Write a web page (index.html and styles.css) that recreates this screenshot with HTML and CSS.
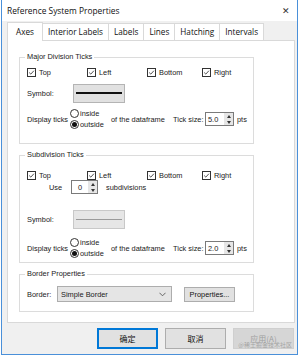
FILE: index.html
```html
<!DOCTYPE html>
<html lang="en">
<head>
  <meta charset="UTF-8">
  <title>Reference System Properties</title>
  <link rel="stylesheet" href="styles.css">
</head>
<body>
  <div class="window">
    <div class="titlebar">
      <span class="title">Reference System Properties</span>
      <span class="close">&#x2715;</span>
    </div>

    <div class="tabs">
      <span class="tab active">Axes</span>
      <span class="tab">Interior Labels</span>
      <span class="tab">Labels</span>
      <span class="tab">Lines</span>
      <span class="tab">Hatching</span>
      <span class="tab">Intervals</span>
    </div>

    <div class="panel">
      <fieldset class="group group-major">
        <legend>Major Division Ticks</legend>
        <div class="checks">
          <label class="check"><span class="box"><svg viewBox="0 0 9 9"><path d="M1.5 4.5 L3.6 6.6 L7.6 2.2" /></svg></span>Top</label>
          <label class="check"><span class="box"><svg viewBox="0 0 9 9"><path d="M1.5 4.5 L3.6 6.6 L7.6 2.2" /></svg></span>Left</label>
          <label class="check"><span class="box"><svg viewBox="0 0 9 9"><path d="M1.5 4.5 L3.6 6.6 L7.6 2.2" /></svg></span>Bottom</label>
          <label class="check"><span class="box"><svg viewBox="0 0 9 9"><path d="M1.5 4.5 L3.6 6.6 L7.6 2.2" /></svg></span>Right</label>
        </div>
        <div class="symbol-row">
          <span class="lbl">Symbol:</span>
          <span class="symbol"><span class="line"></span></span>
        </div>
        <div class="ticks-row">
          <span class="lbl">Display ticks</span>
          <div class="radios">
            <label class="radio"><span class="dot"></span>inside</label>
            <label class="radio"><span class="dot on"></span>outside</label>
          </div>
          <span class="frame">of the dataframe</span>
          <span class="size-lbl">Tick size:</span>
          <span class="spin"><span class="val">5.0</span><span class="arrows"><i class="up"></i><i class="down"></i></span></span>
          <span class="unit">pts</span>
        </div>
      </fieldset>

      <fieldset class="group group-sub">
        <legend>Subdivision Ticks</legend>
        <div class="checks">
          <label class="check"><span class="box"><svg viewBox="0 0 9 9"><path d="M1.5 4.5 L3.6 6.6 L7.6 2.2" /></svg></span>Top</label>
          <label class="check"><span class="box"><svg viewBox="0 0 9 9"><path d="M1.5 4.5 L3.6 6.6 L7.6 2.2" /></svg></span>Left</label>
          <label class="check"><span class="box"><svg viewBox="0 0 9 9"><path d="M1.5 4.5 L3.6 6.6 L7.6 2.2" /></svg></span>Bottom</label>
          <label class="check"><span class="box"><svg viewBox="0 0 9 9"><path d="M1.5 4.5 L3.6 6.6 L7.6 2.2" /></svg></span>Right</label>
        </div>
        <div class="use-row">
          <span class="use">Use</span>
          <span class="spin spin-use"><span class="val">0</span><span class="arrows"><i class="up"></i><i class="down"></i></span></span>
          <span class="subs">subdivisions</span>
        </div>
        <div class="symbol-row">
          <span class="lbl">Symbol:</span>
          <span class="symbol disabled"><span class="line"></span></span>
        </div>
        <div class="ticks-row">
          <span class="lbl">Display ticks</span>
          <div class="radios">
            <label class="radio"><span class="dot"></span>inside</label>
            <label class="radio"><span class="dot on"></span>outside</label>
          </div>
          <span class="frame">of the dataframe</span>
          <span class="size-lbl">Tick size:</span>
          <span class="spin"><span class="val">2.0</span><span class="arrows"><i class="up"></i><i class="down"></i></span></span>
          <span class="unit">pts</span>
        </div>
      </fieldset>

      <fieldset class="group group-border">
        <legend>Border Properties</legend>
        <div class="border-row">
          <span class="lbl">Border:</span>
          <span class="select">Simple Border<svg class="chev" viewBox="0 0 8 5"><path d="M0.5 0.5 L4 4 L7.5 0.5" /></svg></span>
          <button class="btn small">Properties...</button>
        </div>
      </fieldset>
    </div>

    <div class="footer">
      <button class="btn default">确定</button>
      <button class="btn">取消</button>
      <button class="btn disabled">应用(A)</button>
      <span class="watermark">@稀土掘金技术社区</span>
    </div>
  </div>
</body>
</html>
```

FILE: styles.css
```css
* {
  box-sizing: border-box;
  margin: 0;
  padding: 0;
}

body {
  width: 300px;
  height: 357px;
  background: #fff;
  font-family: 'Liberation Sans', Arial, 'Noto Sans CJK SC', sans-serif;
  font-size: 7.4px;
  color: #1a1a1a;
  padding-left: 1px;
  white-space: nowrap;
}

.window {
  width: 297px;
  height: 355px;
  border: 1px solid #4a90d9;
  border-top: none;
  background: #f0f0f0;
  display: flex;
  flex-direction: column;
  position: relative;
}

.titlebar {
  height: 21px;
  background: #fff;
  display: flex;
  align-items: center;
  justify-content: space-between;
  padding: 0 7px 0 5px;
}

.title {
  font-family: 'Open Sans', 'Noto Sans', sans-serif;
  font-size: 8.4px;
  color: #111;
}

.close {
  font-size: 9px;
  color: #333;
}

.tabs {
  display: flex;
  align-items: flex-end;
  padding-left: 5px;
  height: 19px;
}

.tab {
  font-family: 'Open Sans', 'Noto Sans', sans-serif;
  font-size: 8.2px;
  height: 17px;
  line-height: 16px;
  padding: 0 5px;
  border: 1px solid #d9d9d9;
  border-bottom: none;
  border-left: none;
  background: #fff;
  color: #111;
}

.tab.active {
  height: 19px;
  line-height: 17px;
  padding: 0 8px;
  border-left: 1px solid #d9d9d9;
  margin-bottom: -1px;
  position: relative;
  z-index: 1;
}

.panel {
  margin-left: 5px;
  width: 288px;
  height: 283px;
  background: #fff;
  border: 1px solid #d9d9d9;
  padding: 11px 0 0 11px;
  display: flex;
  flex-direction: column;
}

.group {
  width: 235px;
  border: 1px solid #dcdcdc;
  padding: 0 0 0 7px;
  display: flex;
  flex-direction: column;
}

.group legend {
  margin-left: -2px;
  padding: 0 2px;
  line-height: 10px;
  color: #222;
}

.group-major {
  height: 92px;
}

.group-sub {
  margin-top: 6px;
  height: 113px;
}

.group-border {
  margin-top: 6px;
  height: 43px;
}

.checks {
  display: grid;
  grid-template-columns: 60px 60px 55px auto;
  height: 14px;
  align-items: center;
  margin-top: 3px;
}

.group-sub .checks {
  height: 12px;
  margin-top: 9px;
}

.check {
  display: flex;
  align-items: center;
  gap: 3px;
}

.box {
  width: 9px;
  height: 9px;
  border: 1px solid #333;
  background: #fff;
  display: flex;
}

.box svg {
  width: 7px;
  height: 7px;
  fill: none;
  stroke: #222;
  stroke-width: 1;
}

.lbl {
  width: 46px;
  flex: none;
}

.symbol-row {
  display: flex;
  align-items: center;
  margin-top: 4px;
  height: 20px;
}

.group-sub .symbol-row {
  margin-top: 16px;
}

.symbol {
  width: 52px;
  height: 19px;
  background: #e1e1e1;
  border: 1px solid #b4b4b4;
  display: flex;
  align-items: center;
  justify-content: center;
}

.symbol .line {
  width: 46px;
  height: 2px;
  background: #111;
}

.symbol.disabled {
  border-color: #c8c8c8;
  background: #e6e6e6;
}

.symbol.disabled .line {
  height: 1px;
  background: #9a9a9a;
}

.ticks-row {
  display: flex;
  align-items: center;
  margin-top: 4px;
  height: 24px;
}

.group-sub .ticks-row {
  margin-top: 7px;
}

.ticks-row .lbl {
  width: 43px;
}

.radios {
  display: flex;
  flex-direction: column;
  width: 41px;
  flex: none;
}

.radio {
  display: flex;
  align-items: center;
  gap: 1px;
  height: 11px;
}

.dot {
  width: 9px;
  height: 9px;
  border: 1px solid #333;
  border-radius: 50%;
  background: #fff;
  display: flex;
  align-items: center;
  justify-content: center;
}

.dot.on::after {
  content: '';
  width: 5px;
  height: 5px;
  border-radius: 50%;
  background: #111;
}

.frame {
  width: 62px;
  flex: none;
}

.size-lbl {
  width: 32px;
  flex: none;
}

.spin {
  width: 29px;
  height: 14px;
  border: 1px solid #7a7a7a;
  background: #fff;
  display: flex;
  align-items: center;
  justify-content: space-between;
  padding-left: 2px;
}

.arrows {
  width: 9px;
  height: 12px;
  background: #e6e6e6;
  display: flex;
  flex-direction: column;
  justify-content: space-around;
  align-items: center;
}

.arrows i {
  width: 0;
  height: 0;
  border-left: 2px solid transparent;
  border-right: 2px solid transparent;
}

.arrows .up {
  border-bottom: 3px solid #333;
}

.arrows .down {
  border-top: 3px solid #333;
}

.unit {
  margin-left: 3px;
}

.use-row {
  display: flex;
  align-items: center;
  height: 12px;
  padding-left: 22px;
}

.use {
  width: 22px;
}

.spin-use {
  width: 27px;
  padding-left: 6px;
}

.subs {
  margin-left: 8px;
}

.border-row {
  display: flex;
  align-items: center;
  margin-top: 7px;
  height: 16px;
}

.border-row .lbl {
  width: 30px;
}

.select {
  width: 115px;
  height: 16px;
  border: 1px solid #adadad;
  background: #e5e5e5;
  display: flex;
  align-items: center;
  justify-content: space-between;
  padding: 0 5px 0 3px;
}

.chev {
  width: 7px;
  height: 5px;
  fill: none;
  stroke: #555;
  stroke-width: 1;
}

.btn {
  font-family: 'Liberation Sans', Arial, 'Noto Sans CJK SC', sans-serif;
  font-size: 7.4px;
  background: #e1e1e1;
  border: 1px solid #adadad;
  color: #111;
}

.btn.small {
  width: 51px;
  height: 15px;
  margin-left: 12px;
}

.footer {
  display: flex;
  justify-content: flex-end;
  gap: 7px;
  padding: 5px 3px 0 0;
  position: relative;
}

.footer .btn {
  width: 61px;
  height: 21px;
  font-family: 'Noto Sans CJK SC', sans-serif;
  font-size: 8px;
}

.btn.default {
  border: 1px solid #0078d7;
  box-shadow: inset 0 0 0 1px #0078d7;
}

.btn.disabled {
  color: #a0a0a0;
  background: #d6d6d6;
  border-color: #cfcfcf;
}

.watermark {
  position: absolute;
  right: 5px;
  top: 17px;
  font-family: 'Noto Sans CJK SC', sans-serif;
  font-size: 6px;
  color: rgba(150, 150, 150, 0.8);
}
```
